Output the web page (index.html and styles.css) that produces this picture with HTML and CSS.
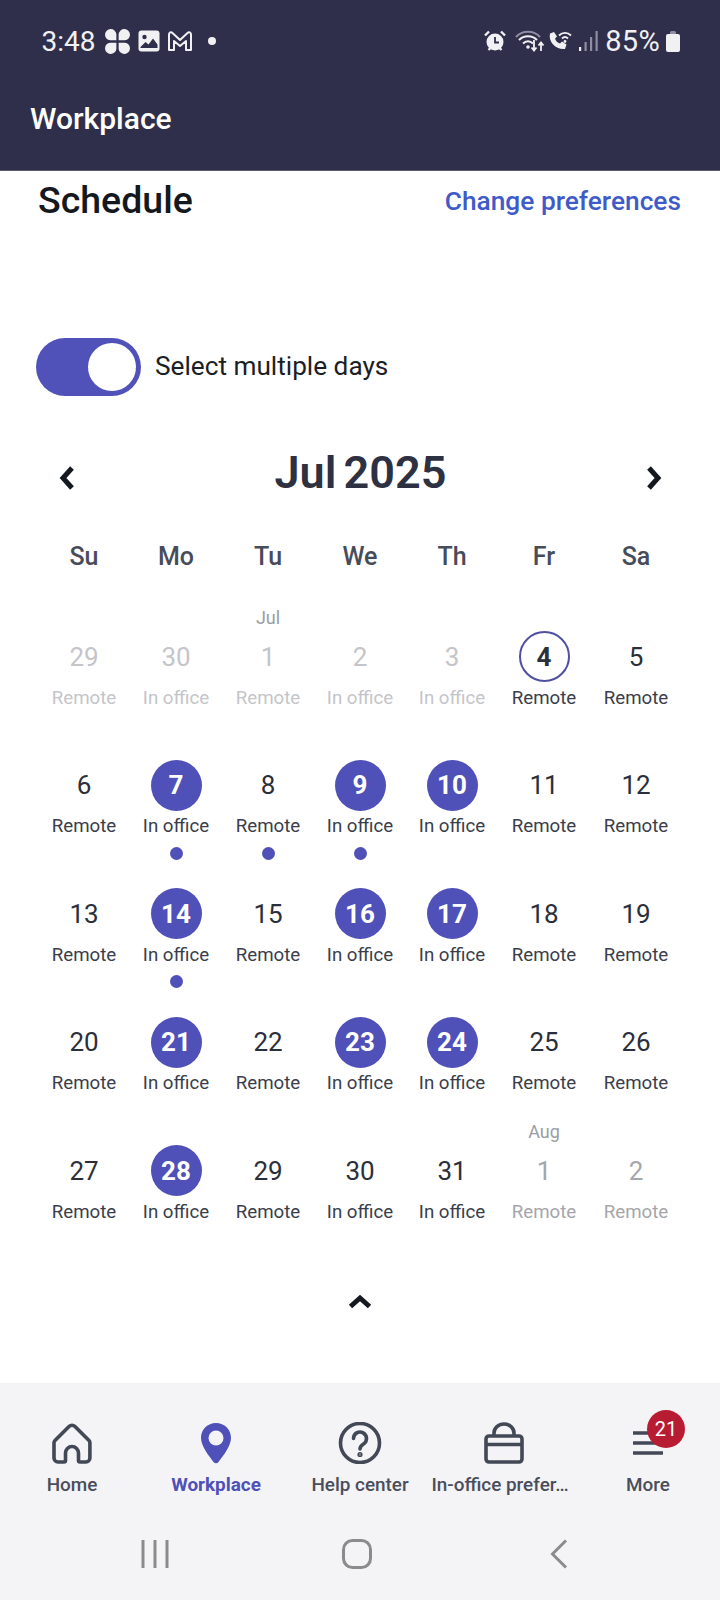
FILE: index.html
```html
<!DOCTYPE html>
<html lang="en">
<head>
    <meta charset="UTF-8">
    <meta name="viewport" content="width=device-width, initial-scale=1.0">
    <title>Workplace</title>
    <link rel="stylesheet" href="styles.css">
</head>
<body>

    <!-- Header -->
    <header class="app-header">
        <div class="status-bar">
            <div class="status-left">
                <span class="status-time">3:48</span>
                <svg class="flower-icon" width="25" height="25" viewBox="1 1 22 22" fill="#f1f1f3"><path d="M11 11H5.500a5 5 0 1 1 5.500-5.500zM13 11V5.500a5 5 0 1 1 5.500 5.500zM11 13v5.500a5 5 0 1 1-5.500-5.500zM13 13h5.500a5 5 0 1 1-5.500 5.500z"/></svg>
                <svg class="image-icon" width="22" height="22" viewBox="0 0 22 22"><rect x="0.500" y="0.500" width="21" height="21" rx="3" fill="#f1f1f3"/><circle cx="6.500" cy="7" r="2.200" fill="#2f2f4b"/><path d="M2.500 17l5-5 3 2.500 4.500-6 4.500 6v3.500h-17z" fill="#2f2f4b"/></svg>
                <svg class="gmail-icon" width="24" height="20" viewBox="0 0 24 20" fill="none" stroke="#f1f1f3" stroke-width="2" stroke-linejoin="round"><path d="M1 3.500c0-2 2-3 3.500-1.500L12 9l7.500-7c1.500-1.500 3.500-.5 3.500 1.500V19h-5V10l-6 5-6-5v9H1z"/></svg>
                <span class="status-dot"></span>
            </div>
            <div class="status-right">
                <svg width="22" height="22" viewBox="0 0 22 22"><circle cx="11" cy="12" r="8.500" fill="#f1f1f3"/><path d="M11 7v5.500h4" fill="none" stroke="#2f2f4b" stroke-width="1.800"/><path d="M1 5.500L5 1.500M21 5.500L17 1.500M4.500 20l2-2M17.500 20l-2-2" stroke="#f1f1f3" stroke-width="2.400"/></svg>
                <svg class="wifi-icon" width="30" height="24" viewBox="0 0 30 24" fill="none"><path d="M1 8C7 1 19 1 25 8" stroke="#8e8ea0" stroke-width="2"/><path d="M4 11c5-5 13-5 18 0M8 14.500c3-3 7-3 10 0" stroke="#f1f1f3" stroke-width="2"/><circle cx="13" cy="18" r="1.800" fill="#f1f1f3"/><path d="M19 11v10M16.500 18.500l2.500 3 2.500-3M26 22v-8M23.500 16.500l2.500-3 2.500 3" stroke="#f1f1f3" stroke-width="1.800"/></svg>
                <svg class="call-icon" width="24" height="20" viewBox="0 0 24 20" fill="none"><path d="M2 2.500L6 1l3 4.500-2 2c.8 2.500 2.500 4.200 5 5l2-2 4.500 3L17 18C8 19 0 11 2 2.500z" fill="#f1f1f3"/><path d="M11 4.500c3.500-3.500 8.500-3.500 12 0M14 7.500c2-2 4-2 6 0" stroke="#f1f1f3" stroke-width="1.800"/><circle cx="17" cy="10.500" r="1.400" fill="#f1f1f3"/></svg>
                <svg class="signal-icon" width="19" height="20" viewBox="0 0 19 20"><rect x="0" y="16" width="2.200" height="4" fill="#f1f1f3"/><rect x="5.500" y="11" width="2.200" height="9" fill="#8e8ea0"/><rect x="11" y="6" width="2.200" height="14" fill="#8e8ea0"/><rect x="16.500" y="0" width="2.200" height="20" fill="#8e8ea0"/></svg>
                <span class="status-battery-text">85%</span>
                <svg width="14" height="22" viewBox="0 0 14 22"><path d="M4 2.500a1.500 1.500 0 0 1 1.500-1.500h3A1.500 1.500 0 0 1 10 2.500V4H4z" fill="#8e8ea0"/><rect x="0" y="4" width="14" height="18" rx="2" fill="#f1f1f3"/></svg>
            </div>
        </div>
        <h1 class="app-title">Workplace</h1>
    </header>

    <!-- Schedule -->
    <main class="schedule">
        <div class="schedule-head">
            <h2>Schedule</h2>
            <a href="#" class="prefs-link">Change preferences</a>
        </div>

        <div class="toggle-row">
            <div class="toggle"><span class="toggle-knob"></span></div>
            <span class="toggle-label">Select multiple days</span>
        </div>

        <div class="month-row">
            <svg class="month-arrow" width="20" height="26" viewBox="0 0 20 26" fill="none" stroke="#14181f" stroke-width="5" stroke-linejoin="miter"><path d="M15 3L6 13l9 10"/></svg>
            <div class="month-title">Jul 2025</div>
            <svg class="month-arrow" width="20" height="26" viewBox="0 0 20 26" fill="none" stroke="#14181f" stroke-width="5" stroke-linejoin="miter"><path d="M5 3l9 10-9 10"/></svg>
        </div>

        <div class="weekdays">
            <span>Su</span><span>Mo</span><span>Tu</span><span>We</span><span>Th</span><span>Fr</span><span>Sa</span>
        </div>

        <div class="calendar">
            <div class="day muted"><span class="num">29</span><span class="kind">Remote</span></div>
            <div class="day muted"><span class="num">30</span><span class="kind">In office</span></div>
            <div class="day muted"><span class="month-tag">Jul</span><span class="num">1</span><span class="kind">Remote</span></div>
            <div class="day muted"><span class="num">2</span><span class="kind">In office</span></div>
            <div class="day muted"><span class="num">3</span><span class="kind">In office</span></div>
            <div class="day today"><span class="num">4</span><span class="kind">Remote</span></div>
            <div class="day"><span class="num">5</span><span class="kind">Remote</span></div>

            <div class="day"><span class="num">6</span><span class="kind">Remote</span></div>
            <div class="day office"><span class="num">7</span><span class="kind">In office</span><span class="dot"></span></div>
            <div class="day"><span class="num">8</span><span class="kind">Remote</span><span class="dot"></span></div>
            <div class="day office"><span class="num">9</span><span class="kind">In office</span><span class="dot"></span></div>
            <div class="day office"><span class="num">10</span><span class="kind">In office</span></div>
            <div class="day"><span class="num">11</span><span class="kind">Remote</span></div>
            <div class="day"><span class="num">12</span><span class="kind">Remote</span></div>

            <div class="day"><span class="num">13</span><span class="kind">Remote</span></div>
            <div class="day office"><span class="num">14</span><span class="kind">In office</span><span class="dot"></span></div>
            <div class="day"><span class="num">15</span><span class="kind">Remote</span></div>
            <div class="day office"><span class="num">16</span><span class="kind">In office</span></div>
            <div class="day office"><span class="num">17</span><span class="kind">In office</span></div>
            <div class="day"><span class="num">18</span><span class="kind">Remote</span></div>
            <div class="day"><span class="num">19</span><span class="kind">Remote</span></div>

            <div class="day"><span class="num">20</span><span class="kind">Remote</span></div>
            <div class="day office"><span class="num">21</span><span class="kind">In office</span></div>
            <div class="day"><span class="num">22</span><span class="kind">Remote</span></div>
            <div class="day office"><span class="num">23</span><span class="kind">In office</span></div>
            <div class="day office"><span class="num">24</span><span class="kind">In office</span></div>
            <div class="day"><span class="num">25</span><span class="kind">Remote</span></div>
            <div class="day"><span class="num">26</span><span class="kind">Remote</span></div>

            <div class="day"><span class="num">27</span><span class="kind">Remote</span></div>
            <div class="day office"><span class="num">28</span><span class="kind">In office</span></div>
            <div class="day"><span class="num">29</span><span class="kind">Remote</span></div>
            <div class="day"><span class="num">30</span><span class="kind">In office</span></div>
            <div class="day"><span class="num">31</span><span class="kind">In office</span></div>
            <div class="day next"><span class="month-tag">Aug</span><span class="num">1</span><span class="kind">Remote</span></div>
            <div class="day next"><span class="num">2</span><span class="kind">Remote</span></div>
        </div>

        <div class="collapse">
            <svg width="26" height="16" viewBox="0 0 26 16" fill="none" stroke="#14181f" stroke-width="5"><path d="M3.500 13.500L13 5l9.500 8.500"/></svg>
        </div>
    </main>

    <!-- Bottom navigation -->
    <footer class="bottom">
        <nav class="tabs">
            <div class="tab">
                <svg width="40" height="42" viewBox="0 0 40 42" fill="none" stroke="#434857" stroke-width="3.600" stroke-linejoin="round"><path d="M3 18.500L17 4.500c1.700-1.700 4.300-1.700 6 0l14 14c.6.600.9 1.400.9 2.200V36a4 4 0 0 1-4 4H28a1.500 1.500 0 0 1-1.500-1.500V31a6.500 6.500 0 0 0-13 0v7.500A1.500 1.500 0 0 1 12 40H6a4 4 0 0 1-4-4V20.700c0-.8.400-1.600 1-2.200z"/></svg>
                <span>Home</span>
            </div>
            <div class="tab active">
                <svg width="32" height="42" viewBox="0 0 32 42"><path d="M16 1C7.500 1 1 7.500 1 16c0 8 8 18 12.500 24 1.300 1.600 3.700 1.600 5 0C23 34 31 24 31 16 31 7.500 24.500 1 16 1z" fill="#4f50b8"/><circle cx="16" cy="16" r="7.500" fill="#f4f4f7"/></svg>
                <span>Workplace</span>
            </div>
            <div class="tab">
                <svg width="44" height="42" viewBox="0 0 44 42" fill="none" stroke="#434857" stroke-width="3.600" stroke-linecap="round"><circle cx="22" cy="21" r="19.500"/><path d="M15.500 16.500a6.500 6.500 0 1 1 10 5.500c-2.300 1.500-3.500 2.800-3.500 5"/><circle cx="22" cy="32.500" r="0.800" fill="#434857"/></svg>
                <span>Help center</span>
            </div>
            <div class="tab tab-prefs">
                <svg width="40" height="42" viewBox="0 0 40 42" fill="none" stroke="#434857" stroke-width="3.600" stroke-linejoin="round"><path d="M10 14v-3a10 9 0 0 1 20 0v3"/><rect x="2" y="14" width="36" height="26" rx="3"/><path d="M2 22.500h36"/></svg>
                <span>In-office prefer…</span>
            </div>
            <div class="tab">
                <div class="more-icon">
                    <svg width="32" height="42" viewBox="0 0 32 42" stroke="#434857" stroke-width="3.600"><path d="M1 11h30M1 21h30M1 31h30"/></svg>
                    <span class="badge">21</span>
                </div>
                <span>More</span>
            </div>
        </nav>
        <div class="system-nav">
            <svg width="28" height="30" viewBox="0 0 28 30" stroke="#8b8b8e" stroke-width="3"><path d="M2 1v28M14 1v28M26 1v28"/></svg>
            <svg class="sys-home" width="30" height="30" viewBox="0 0 30 30" fill="none" stroke="#8b8b8e" stroke-width="3"><rect x="1.500" y="1.500" width="27" height="27" rx="9"/></svg>
            <svg class="sys-back" width="18" height="30" viewBox="0 0 18 30" fill="none" stroke="#8b8b8e" stroke-width="3"><path d="M16 1.500L2.500 15 16 28.500"/></svg>
        </div>
    </footer>

</body>
</html>
```

FILE: styles.css
```css
body {
    font-family: 'Roboto', sans-serif;
    background-color: #fff;
    color: #2b2f3a;
    margin: 0;
    padding: 0;
    width: 720px;
    height: 1600px;
    display: flex;
    flex-direction: column;
    overflow: hidden;
}

/* Header */
.app-header {
    background-color: #2f2f4b;
    border-bottom: 1px solid #5b5b72;
    height: 171px;
    box-sizing: border-box;
    flex-shrink: 0;
    color: #fff;
}
.status-bar {
    display: flex;
    justify-content: space-between;
    align-items: center;
    padding: 24px 40px 0 41.500px;
    height: 34px;
    color: #f1f1f3;
}
.status-left,
.status-right {
    display: flex;
    align-items: center;
}
.status-time {
    font-size: 28px;
    margin-right: 9px;
}
.image-icon {
    margin-left: 8px;
}
.gmail-icon {
    margin-left: 8px;
}
.status-dot {
    width: 8px;
    height: 8px;
    margin-left: 16px;
    border-radius: 50%;
    background-color: #f1f1f3;
}
.wifi-icon {
    margin-left: 9px;
}
.call-icon {
    margin-left: 3px;
}
.signal-icon {
    margin-left: 7px;
}
.status-battery-text {
    font-size: 29px;
    letter-spacing: 0.300px;
    margin-left: 7px;
    margin-right: 6px;
}
.app-title {
    margin: 41px 0 0 30px;
    font-size: 30px;
    line-height: 40px;
    font-weight: 500;
}

/* Schedule */
.schedule {
    flex: 1;
    padding: 0 38px;
}
.schedule-head {
    display: flex;
    justify-content: space-between;
    align-items: center;
    margin-top: 7px;
    height: 44px;
}
.schedule-head h2 {
    margin: 0;
    font-size: 37.500px;
    font-weight: 500;
    color: #14181f;
}
.prefs-link {
    color: #3f5bc9;
    font-size: 26.300px;
    font-weight: 500;
    text-decoration: none;
    margin-right: 1px;
    padding-top: 1px;
}

/* Toggle */
.toggle-row {
    display: flex;
    align-items: center;
    margin: 116px 0 0 -2px;
}
.toggle {
    width: 105px;
    height: 58px;
    border-radius: 29px;
    background-color: #5052ba;
    display: flex;
    justify-content: flex-end;
    align-items: center;
    padding-right: 5px;
    box-sizing: border-box;
}
.toggle-knob {
    width: 48px;
    height: 48px;
    border-radius: 50%;
    background-color: #fff;
}
.toggle-label {
    margin-left: 14px;
    margin-bottom: 2px;
    font-size: 26.200px;
    color: #1b1e26;
}

/* Month */
.month-row {
    display: flex;
    justify-content: space-between;
    align-items: center;
    margin-top: 46px;
    height: 60px;
    padding: 0 18px 0 19px;
}
.month-title {
    font-size: 45px;
    font-weight: 600;
    word-spacing: -4px;
    color: #2e3142;
}
.month-arrow {
    margin-top: 12px;
}
.weekdays {
    display: grid;
    grid-template-columns: repeat(7, 92px);
    margin-top: 37px;
    text-align: center;
    font-size: 25px;
    line-height: 36px;
    font-weight: 500;
    color: #474c5b;
}

/* Calendar */
.calendar {
    display: grid;
    grid-template-columns: repeat(7, 92px);
    grid-auto-rows: 128.500px;
    margin-top: 56px;
}
.day {
    position: relative;
    display: flex;
    flex-direction: column;
    align-items: center;
}
.num {
    width: 51px;
    height: 51px;
    display: flex;
    align-items: center;
    justify-content: center;
    box-sizing: border-box;
    border-radius: 50%;
    font-size: 26px;
}
.kind {
    font-size: 18.700px;
    line-height: 26px;
    margin-top: 2.500px;
    color: #3a3e4a;
}
.dot {
    width: 13px;
    height: 13px;
    margin-top: 7.500px;
    border-radius: 50%;
    background-color: #4f50b8;
}
.month-tag {
    position: absolute;
    top: -26px;
    font-size: 18px;
    line-height: 26px;
    color: #9a9da4;
}
.muted .num,
.muted .kind {
    color: #c4c5c9;
}
.next .num,
.next .kind {
    color: #a4a6ab;
}
.today .num {
    border: 2px solid #4f50a0;
    font-weight: 700;
}
.office .num {
    background-color: #4f50b8;
    color: #fff;
    font-weight: 700;
}
.collapse {
    display: flex;
    justify-content: center;
    margin-top: 19px;
}

/* Bottom navigation */
.bottom {
    background-color: #f4f4f7;
    height: 217px;
    flex-shrink: 0;
}
.tabs {
    display: grid;
    grid-template-columns: repeat(5, 144px);
    padding-top: 39px;
}
.tab {
    display: flex;
    flex-direction: column;
    align-items: center;
    color: #4a4e5c;
    font-size: 18.900px;
    font-weight: 500;
}
.tab span {
    margin-top: 8px;
    line-height: 26px;
}
.tab.active {
    color: #4f50b8;
    font-weight: 700;
}
.tab-prefs span {
    margin-left: -8px;
}
.more-icon {
    position: relative;
    height: 42px;
}
.more-icon svg {
    display: block;
}
.more-icon .badge {
    position: absolute;
    top: -12px;
    left: 15px;
    width: 38px;
    height: 38px;
    margin: 0;
    border-radius: 50%;
    background-color: #b81c32;
    color: #fff;
    font-weight: 400;
    font-size: 20px;
    line-height: 38px;
    text-align: center;
}
.system-nav {
    display: flex;
    align-items: center;
    padding: 41px 0 0 141px;
}
.sys-home {
    margin-left: 173px;
}
.sys-back {
    margin-left: 178px;
}
```
